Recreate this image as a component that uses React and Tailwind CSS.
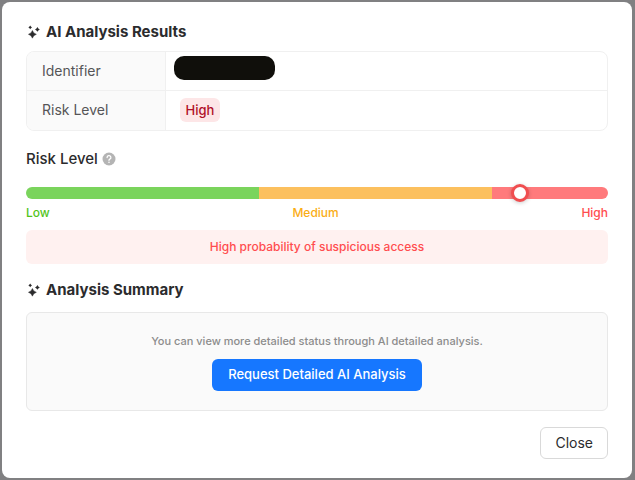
import React, { useState } from "react";

function Sparkles() {
  return (
    <svg viewBox="0 0 16 16" className="size-4 shrink-0" fill="currentColor" aria-hidden="true">
      <path d="M6.4 6.4 Q7.3 9.4 10.4 10.3 Q7.3 11.2 6.4 14.2 Q5.5 11.2 2.4 10.3 Q5.5 9.4 6.4 6.4Z" stroke="currentColor" strokeWidth=".4" />
      <path d="M11.4 3 Q12 4.8 13.8 5.4 Q12 6 11.4 7.8 Q10.8 6 9 5.4 Q10.8 4.8 11.4 3Z" />
      <path d="M4.2 1.6 Q4.7 2.9 6 3.4 Q4.7 3.9 4.2 5.2 Q3.7 3.9 2.4 3.4 Q3.7 2.9 4.2 1.6Z" />
    </svg>
  );
}

function QuestionIcon() {
  return (
    <svg viewBox="0 0 14 14" className="size-3.5 shrink-0" aria-hidden="true">
      <circle cx="7" cy="7" r="6.5" fill="#b4b4b4" />
      <path d="M5.1 5.5a1.9 1.8 0 1 1 2.7 1.6c-.6.3-.8.6-.8 1.2" fill="none" stroke="#fff" strokeWidth="1.3" strokeLinecap="round" />
      <circle cx="7" cy="10.3" r=".8" fill="#fff" />
    </svg>
  );
}

function SectionTitle({ children }) {
  return (
    <h2 className="flex items-center gap-1 text-[15px] leading-6 font-bold text-[#2b2b2d]">
      <Sparkles />
      {children}
    </h2>
  );
}

function RiskSlider() {
  const [risk, setRisk] = useState(86);

  return (
    <section className="mt-4">
      <div className="flex items-center gap-1">
        <label htmlFor="risk" className="text-[15px] leading-6 font-medium text-[#2b2b2d]">
          Risk Level
        </label>
        <button type="button" aria-label="About risk level">
          <QuestionIcon />
        </button>
      </div>
      <input
        id="risk"
        type="range"
        min="0"
        max="100"
        value={risk}
        onChange={(e) => setRisk(Number(e.target.value))}
        className="mt-4 block h-3 w-full appearance-none rounded-full bg-[linear-gradient(to_right,#7ad45c_40%,#fcc05e_40%,#fcc05e_80%,#ff7a7c_80%)] [&::-webkit-slider-thumb]:size-[18px] [&::-webkit-slider-thumb]:appearance-none [&::-webkit-slider-thumb]:rounded-full [&::-webkit-slider-thumb]:border-3 [&::-webkit-slider-thumb]:border-[#f04e50] [&::-webkit-slider-thumb]:bg-white [&::-webkit-slider-thumb]:shadow-[0_1px_4px_rgba(0,0,0,0.2)]"
      />
      <div className="mt-1.5 flex justify-between text-xs leading-4 font-medium">
        <span className="text-[#52c41a]">Low</span>
        <span className="text-[#faad14]">Medium</span>
        <span className="text-[#ff4d4f]">High</span>
      </div>
      <p className="mt-[9px] rounded-md bg-[#fff1f0] py-2 text-center text-xs leading-[18px] font-medium text-[#ff4d4f]">
        High probability of suspicious access
      </p>
    </section>
  );
}

export default function App() {
  return (
    <div className="min-h-screen bg-[#808082] p-0.5 pr-[3px] font-['Inter',sans-serif]">
      <div role="dialog" aria-label="AI Analysis Results" className="rounded-lg bg-white px-6 pt-[18px] pb-[19px]">
        <SectionTitle>AI Analysis Results</SectionTitle>

        <div className="mt-[7px] overflow-hidden rounded-lg border border-[#f0f0f0]">
          <table className="w-full text-left text-sm text-[#555557]">
            <tbody>
              <tr className="h-[38px] border-b border-[#f0f0f0]">
                <th scope="row" className="w-[138px] border-r border-[#f0f0f0] bg-[#fafafa] px-[15px] py-0 font-normal">
                  Identifier
                </th>
                <td className="px-2 py-0">
                  <div className="mb-1.5 h-6 w-[101px] rounded-[10px] bg-[#100f0b]" />
                </td>
              </tr>
              <tr className="h-10">
                <th scope="row" className="border-r border-[#f0f0f0] bg-[#fafafa] px-[15px] py-0 font-normal">
                  Risk Level
                </th>
                <td className="px-3.5 py-0">
                  <span className="inline-block rounded-md bg-[#fde6e7] px-1.5 text-[13px] leading-6 font-medium text-[#b00f27]">
                    High
                  </span>
                </td>
              </tr>
            </tbody>
          </table>
        </div>

        <RiskSlider />

        <section className="mt-3.5">
          <SectionTitle>Analysis Summary</SectionTitle>
          <div className="mt-2.5 flex flex-col items-center rounded-md border border-[#e8e8e8] bg-[#fafafa] pt-5 pb-[19px]">
            <p className="text-[11px] leading-4 font-medium text-[#8c8c8c]">
              You can view more detailed status through AI detailed analysis.
            </p>
            <button type="button" className="mt-2.5 h-8 rounded-md bg-[#1677ff] px-4 text-[13px] font-medium text-white">
              Request Detailed AI Analysis
            </button>
          </div>
        </section>

        <div className="mt-4 flex justify-end">
          <button type="button" className="h-8 rounded-md border border-[#d9d9d9] bg-white px-3.5 text-sm text-[#2b2b2d]">
            Close
          </button>
        </div>
      </div>
    </div>
  );
}
